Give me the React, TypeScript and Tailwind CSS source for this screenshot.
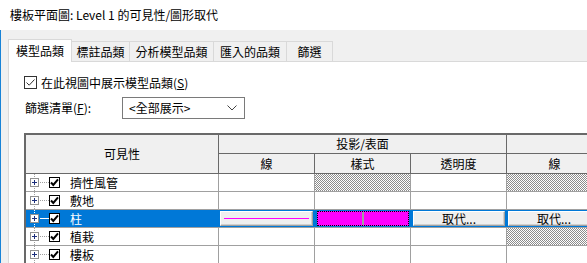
const tabs = [
  { label: "模型品類", w: "w-[64px]", active: true },
  { label: "標註品類", w: "w-[58px]" },
  { label: "分析模型品類", w: "w-[84px]" },
  { label: "匯入的品類", w: "w-[73px]" },
  { label: "篩選", w: "w-[46px]" },
];

const rows = [
  { name: "擠性風管", hatch: [2, 4] },
  { name: "敷地", hatch: [] as number[] },
  { name: "柱", hatch: [] as number[], selected: true },
  { name: "植栽", hatch: [4] },
  { name: "樓板", hatch: [] as number[] },
];

const hatch =
  "bg-[conic-gradient(#8c8c8c_25%,#ffffff_0_50%,#8c8c8c_0_75%,#ffffff_0)] bg-[length:2px_2px]";

function DialogCheck() {
  return (
    <span className="flex h-[13px] w-[13px] shrink-0 items-center justify-center border border-[#333] bg-white">
      <svg width="11" height="11" viewBox="0 0 11 11">
        <path d="M1.5 5.5 L4.2 8.2 L9.5 2.5" fill="none" stroke="#333" strokeWidth="1" />
      </svg>
    </span>
  );
}

function TreeCheck() {
  return (
    <span className="flex h-[11px] w-[11px] shrink-0 items-center justify-center border border-black bg-white">
      <svg width="9" height="9" viewBox="0 0 9 9">
        <path d="M1 4.5 L3.3 7 L8 1.3" fill="none" stroke="#000" strokeWidth="2" />
      </svg>
    </span>
  );
}

function PlusBox() {
  return (
    <span className="flex h-[9px] w-[9px] shrink-0 items-center justify-center border border-[#919191] bg-white">
      <svg width="7" height="7" viewBox="0 0 7 7">
        <path d="M1 3.5 H6 M3.5 1 V6" stroke="#1c2f7c" strokeWidth="1" />
      </svg>
    </span>
  );
}

function Button({ children, className }: { children?: React.ReactNode; className?: string }) {
  return (
    <div
      className={`flex h-[15px] items-center justify-center border border-[#a0a0a0] border-t-white border-l-white bg-[#efefef] shadow-[inset_-1px_-1px_0_#d0d0d0] ${className ?? ""}`}
    >
      {children}
    </div>
  );
}

export default function App() {
  return (
    <div className="flex h-[263px] w-[587px] flex-col overflow-hidden bg-white font-['Noto_Sans_CJK_TC',sans-serif] text-[12px] leading-none text-black">
      {/* Title */}
      <div className="flex h-[30px] shrink-0 items-center pl-[10px]">樓板平面圖: Level 1 的可見性/圖形取代</div>

      <div className="flex flex-1 flex-col border-l border-[#1883d7] bg-[#f0f0f0]">
        {/* Tabs */}
        <div className="flex h-[32px] shrink-0 items-end pl-[7px]">
          {tabs.map((t) =>
            t.active ? (
              <div key={t.label} className={`${t.w} flex h-[23px] items-center justify-center border border-b-0 border-[#d9d9d9] bg-white`}>
                {t.label}
              </div>
            ) : (
              <div key={t.label} className={`${t.w} flex h-[21px] items-center justify-center border border-l-0 border-[#d9d9d9]`}>
                {t.label}
              </div>
            )
          )}
          <div className="flex-1 border-b border-[#d9d9d9]" />
        </div>

        {/* Panel */}
        <div className="ml-[7px] flex flex-1 flex-col border-l border-[#d9d9d9] bg-white pl-[15px]">
          <div className="mt-[14px] flex h-[13px] items-center gap-[4px]">
            <DialogCheck />
            <span>
              在此視圖中展示模型品類(<span className="underline">S</span>)
            </span>
          </div>

          <div className="mt-[8px] flex h-[22px] items-center">
            <span className="w-[98px] pl-[1px]">
              篩選清單(<span className="underline">F</span>):
            </span>
            <div className="flex h-[22px] w-[123px] items-center justify-between border border-[#7a7a7a] bg-white pl-[6px] pr-[7px]">
              <span>&lt;全部展示&gt;</span>
              <svg width="10" height="6" viewBox="0 0 10 6">
                <path d="M0.5 0.5 L5 5 L9.5 0.5" fill="none" stroke="#444" strokeWidth="1" />
              </svg>
            </div>
          </div>

          {/* Table */}
          <div className="mt-[14px] flex w-[600px] flex-col border-l-2 border-t-2 border-[#696969]">
            <div className="flex">
              <div className="flex h-[39px] w-[193px] shrink-0 items-center justify-center border-b border-r border-[#696969] bg-[#f0f0f0]">
                可見性
              </div>
              <div className="flex flex-col">
                <div className="flex">
                  <div className="flex h-[19px] w-[288px] items-center justify-center border-b border-r border-[#696969] bg-[#f0f0f0]">
                    投影/表面
                  </div>
                  <div className="h-[19px] w-[120px] border-b border-[#696969] bg-[#f0f0f0]" />
                </div>
                <div className="flex">
                  {["線", "樣式", "透明度", "線"].map((h, i) => (
                    <div key={i} className="flex h-[20px] w-[96px] items-center justify-center border-b border-r border-[#696969] bg-[#f0f0f0]">
                      {h}
                    </div>
                  ))}
                </div>
              </div>
            </div>

            {rows.map((r) =>
              r.selected ? (
                <div key={r.name} className="flex h-[18px] border-b border-[#a0a0a0] bg-[#0078d7]">
                  <div className="flex w-[193px] shrink-0 items-center border-r border-[#0078d7] pl-[4px] text-white">
                    <div className="relative flex h-full w-[10px] items-center">
                      <div className="absolute left-[4px] top-0 h-full border-l border-dotted border-white" />
                      <div className="relative">
                        <PlusBox />
                      </div>
                    </div>
                    <div className="w-[9px] border-t border-white" />
                    <TreeCheck />
                    <span className="pl-[10px]">{r.name}</span>
                  </div>
                  <div className="flex w-[96px] items-center px-[1px]">
                    <Button className="w-[93px]">
                      <div className="h-px w-[85px] bg-[#ff00ff]" />
                    </Button>
                  </div>
                  <div className="flex w-[96px] items-center pl-[2px]">
                    <div className="flex h-[15px] w-[92px] border border-dotted border-black bg-[#ff00ff]">
                      <div className="flex-1" />
                      <div className="w-[2px] bg-[#a0a0a0]" />
                      <div className="flex-1" />
                    </div>
                  </div>
                  <div className="flex w-[96px] items-center pl-[2px]">
                    <Button className="w-[92px]">取代...</Button>
                  </div>
                  <div className="flex w-[96px] items-center pl-[1px]">
                    <Button className="w-[92px]">取代...</Button>
                  </div>
                </div>
              ) : (
                <div key={r.name} className="flex h-[18px] border-b border-[#a0a0a0]">
                  <div className="flex w-[193px] shrink-0 items-center border-r border-[#a0a0a0] pl-[4px]">
                    <div className="relative flex h-full w-[10px] items-center">
                      <div className="absolute left-[4px] top-0 h-full border-l border-dotted border-[#a0a0a0]" />
                      <div className="relative">
                        <PlusBox />
                      </div>
                    </div>
                    <div className="w-[9px] border-t border-dotted border-[#a0a0a0]" />
                    <TreeCheck />
                    <span className="pl-[10px]">{r.name}</span>
                  </div>
                  {[1, 2, 3, 4].map((c) => (
                    <div key={c} className={`w-[96px] border-r border-[#a0a0a0] ${r.hatch.includes(c) ? hatch : ""}`} />
                  ))}
                </div>
              )
            )}
          </div>
        </div>
      </div>
    </div>
  );
}
